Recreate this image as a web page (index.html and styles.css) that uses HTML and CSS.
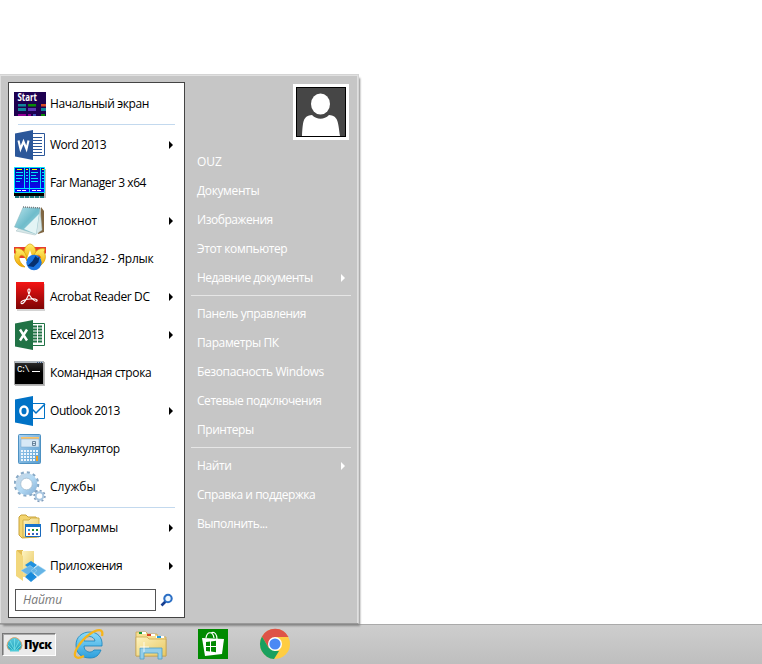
FILE: index.html
```html
<!DOCTYPE html>
<html lang="ru">
<head>
<meta charset="utf-8">
<title>Пуск</title>
<link rel="stylesheet" href="styles.css">
</head>
<body>
<svg class="defs" width="0" height="0" aria-hidden="true">
  <defs>
    <linearGradient id="red" x2="0" y2="1"><stop stop-color="#f51414"/><stop offset="1" stop-color="#7d0505"/></linearGradient>
    <linearGradient id="note" x2="1" y2="1"><stop stop-color="#b9e4ec"/><stop offset=".5" stop-color="#6fbccb"/><stop offset="1" stop-color="#b4dde4"/></linearGradient>
    <linearGradient id="gold" x2="0" y2="1"><stop stop-color="#fff06a"/><stop offset="1" stop-color="#f2a500"/></linearGradient>
    <linearGradient id="folder" x2="1" y2="1"><stop stop-color="#fdf3c0"/><stop offset="1" stop-color="#e8c761"/></linearGradient>
    <linearGradient id="calc" x2="1" y2="1"><stop stop-color="#a9d2f2"/><stop offset="1" stop-color="#5b9fd0"/></linearGradient>
    <linearGradient id="gear" x2="1" y2="1"><stop stop-color="#c6d7e6"/><stop offset=".5" stop-color="#b4dbf5"/><stop offset="1" stop-color="#8fb8dc"/></linearGradient>
    <linearGradient id="ie" x2="0" y2="1"><stop stop-color="#8edcf8"/><stop offset="1" stop-color="#2e9fdd"/></linearGradient>
    <linearGradient id="cmd" x2="0" y2="1"><stop stop-color="#303030"/><stop offset=".5" stop-color="#000"/></linearGradient>
    <linearGradient id="far" x2="0" y2="1"><stop stop-color="#0a0a9c"/><stop offset="1" stop-color="#0808ff"/></linearGradient>
    <linearGradient id="shell" x2="0" y2="1"><stop stop-color="#5ccbe0"/><stop offset="1" stop-color="#1fa3b8"/></linearGradient>
    <g id="pages"><path d="M17 4.500h13.500v22H17z" fill="#fff" stroke="currentColor"/></g>
    <path id="cover" d="M1 4.500 19 1v30L1 27.500z"/>
  </defs>
</svg>
<div class="desktop">
<main class="menu">
  <section class="programs">
    <div class="item"><svg class="icon" viewBox="0 0 32 32"><path fill="#1e0050" d="M0 4h32v24H0z"/><path fill="#11879a" d="M4 16h8v2.500H4zM27 20h5v3h-5z"/><path fill="#088b08" d="M14 16h8v2.500h-8z"/><path fill="#d74a26" d="M27 16h5v2.500h-5z"/><path fill="#5d38b5" d="M14 20h8v3h-8z"/><path fill="#900095" d="M4 26h8v2H4zM14 26h3v2h-3z"/><path fill="#11879a" d="M4 20h8v3H4z"/><path fill="#088b08" d="M27 26h4v2h-4z"/><path fill="#4052bc" d="M19 26h3v2h-3z"/><text x="3.500" y="13" class="start-text" textLength="19.500" lengthAdjust="spacingAndGlyphs">Start</text></svg><span class="tight-3">Начальный экран</span></div>
    <hr>
    <div class="item"><svg class="icon word" viewBox="0 0 32 32"><use href="#pages"/><path stroke="currentColor" d="M19 8.500h9M19 11.500h9M19 14.500h9M19 17.500h9M19 20.500h9M19 23.500h9"/><use href="#cover" fill="currentColor"/><path d="m4.500 11.500 2 8.500L9.500 12.500 12.500 20l2-8.500" fill="none" stroke="#fff" stroke-width="2.100"/></svg><span class="tight-5">Word 2013</span><i class="arrow"></i></div>
    <div class="item"><svg class="icon" viewBox="0 0 32 32"><path fill="#bbb" d="M2 2h30v29H2z"/><path fill="#000" d="M0 25h30v4H0z"/><path stroke="#18777c" stroke-width="2" stroke-dasharray="4 1" d="M1 30h30"/><path fill="url(#far)" stroke="#00e4fa" d="M.5.500h30v25H.500z"/><path fill="none" stroke="#00e4fa" d="M10.500 1v20M15.500 1v24M26.500 1v20M1 21.500h30"/><path stroke="#ff0" d="M3 2.500h5M12 2.500h2M18 2.500h5M28 2.500h2"/><path stroke="#00e4fa" stroke-width="1.200" d="M2 5.500h7M2 8.500h7M2 11.500h6M2 14.500h4M12 5.500h2M12 8.500h2M12 11.500h2M12 14.500h2M17 5.500h7M17 8.500h5M17 11.500h7M17 14.500h7M28 5.500h2M28 8.500h2M28 11.500h2M28 14.500h2"/><path stroke="#fff" stroke-dasharray="4 1" d="M3 23.500h10M18 23.500h10"/></svg><span class="tight-4">Far Manager 3 x64</span></div>
    <div class="item"><svg class="icon" viewBox="0 0 32 32"><path fill="#806642" d="m27 2 3 4v21l-6 2z"/><path fill="#d7e8e9" stroke="#a7bfc2" stroke-width=".5" d="M26 3l2 22-7 5-19-4z"/><path fill="url(#note)" stroke="#86b5bd" stroke-width=".5" d="M9 2.500 26 3l-4 26L.500 22z"/><path fill="#e3f4f5" d="m10 24 15-15-3 20z"/><path stroke="#747d80" stroke-width="1.500" stroke-dasharray="1 1" d="m9 2 18 1"/></svg><span class="tight-1">Блокнот</span><i class="arrow"></i></div>
    <div class="item"><svg class="icon" viewBox="0 0 32 32"><path fill="#e83c2f" d="M0 4h32v6l-5 5H5L0 10z"/><g fill="url(#gold)" stroke="#d79b00" stroke-width=".7"><path d="M10 10c0-6 4-9 6-9s6 3 6 9l-3 8h-6z"/><path d="M1 6c7-2 12 4 12 12-2-5-5-7-7-5-2 3 0 7 5 11C3 24-2 15 2 9z"/><path d="M31 6c-7-2-12 4-12 12 2-5 5-7 7-5 2 3 0 7-5 11 8 0 13-9 9-15z"/></g><path fill="#fff" d="m16 7 3 9-3 7-3-7z"/><circle cx="20" cy="19.500" r="7.700" fill="#1c74e0"/><path d="m13.500 23 5-5 3-5 2 2 2-1-1 5-5 5z" fill="#07306f"/></svg><span class="tight-2">miranda32 - Ярлык</span></div>
    <div class="item"><svg class="icon" viewBox="0 0 32 32"><path fill="#aaa" d="M3 3h28v27H3z" opacity=".5"/><path fill="url(#red)" d="M2 1h28v27H2z"/><path d="M15 8c2 0 1 4-2 9-2 4-5 7-6 5-1-3 13-6 16-3 1 3-5 0-7-4-2-3-3-7-1-7z" fill="none" stroke="#fff" stroke-width="1.100"/></svg><span class="tight-3">Acrobat Reader DC</span><i class="arrow"></i></div>
    <div class="item"><svg class="icon excel" viewBox="0 0 32 32"><use href="#pages"/><path stroke="currentColor" stroke-width="2" stroke-dasharray="4 1" d="M19 7.500h9M19 10.500h9M19 13.500h9M19 16.500h9M19 19.500h9M19 22.500h9"/><use href="#cover" fill="currentColor"/><path d="m6 10.500 7 11M13 10.500l-7 11" stroke="#fff" stroke-width="2.400"/></svg><span class="tight-5">Excel 2013</span><i class="arrow"></i></div>
    <div class="item"><svg class="icon" viewBox="0 0 32 32"><path fill="#bbb" d="M1 5h30v24H1z"/><path fill="url(#cmd)" stroke="#aaa" d="M.5 4.500h29v23H.500z"/><path fill="#aeb6bd" d="M1 4h28v2H1z"/><path stroke="#fff" d="M18 14.500h8"/><path stroke="#345483" stroke-dasharray="1 1" d="M23 5.500h5"/><text x="3" y="15" class="prompt" textLength="13">C:\</text></svg><span class="tight-3">Командная строка</span></div>
    <div class="item"><svg class="icon outlook" viewBox="0 0 32 32"><path d="M17 8.500h13.500v15H17z" fill="#fff" stroke="currentColor"/><path d="m18 14 4 4 9-9" fill="none" stroke="currentColor" stroke-width="1.500"/><use href="#cover" fill="currentColor"/><ellipse cx="10" cy="16" rx="3.700" ry="4.500" fill="none" stroke="#fff" stroke-width="2.300"/></svg><span class="tight-4">Outlook 2013</span><i class="arrow"></i></div>
    <div class="item"><svg class="icon" viewBox="0 0 32 32"><rect x="4.500" y="1.500" width="22" height="29" rx="1" fill="url(#calc)" stroke="#4d91c2"/><path fill="#fac36b" d="M7 4h18v2H7z"/><path fill="#d7e9f6" stroke="#75a6ca" stroke-width=".5" d="M7 6h18v8H7z"/><path d="M18.500 8.500h3v4h-3zM18.500 10.500h3" fill="none" stroke="#536f89" stroke-width=".8"/><path stroke="#eef6fc" stroke-width="2" stroke-dasharray="2 1" d="M7 18h17M7 21h17M7 24h14M7 27h14"/><path fill="#f5a01d" d="M22 23h2v5h-2z"/></svg><span class="tight-3">Калькулятор</span></div>
    <div class="item"><svg class="icon" viewBox="0 0 32 32" fill="none"><circle cx="12.500" cy="13" r="11.500" stroke="#87a9c6" stroke-width="2.500" stroke-dasharray="3 3.020"/><circle cx="12.500" cy="13" r="8.300" stroke="url(#gear)" stroke-width="5"/><circle cx="12.500" cy="13" r="5.800" fill="#fff" stroke="#9ab3c7" stroke-width=".7"/><circle cx="25.500" cy="25" r="5.300" stroke="#829dbb" stroke-width="1.800" stroke-dasharray="2 2.080"/><circle cx="25.500" cy="25" r="3.800" fill="#fff" stroke="#a9c7e1" stroke-width="2"/></svg><span>Службы</span></div>
    <hr>
    <div class="item"><svg class="icon" viewBox="0 0 32 32"><path fill="#f4d56f" stroke="#c9a33b" d="m5 5 2-2h5l2 2h8l1 2v18L8 26 5 23z"/><path fill="url(#folder)" stroke="#d1af48" d="M9 8h6l2-2h8v19H9z"/><path fill="#fff" stroke="#1868bb" d="M11.500 12.500h15v12h-15z"/><path fill="#1673cb" d="M11 12h16v3H11z"/><path fill="#2f93dd" d="M14 17h2v2h-2z"/><path fill="#218c34" d="M18 17h2v2h-2zM22 17h2v2h-2z"/><path fill="#df4a25" d="M14 21h2v2h-2z"/><path fill="#3465c0" d="M18 21h2v2h-2zM22 21h2v2h-2z"/></svg><span class="tight-1">Программы</span><i class="arrow"></i></div>
    <div class="item"><svg class="icon" viewBox="0 0 32 32"><path fill="#e3bd56" d="M3 0h6v28l-6-3z"/><path fill="url(#folder)" d="M8 1h12v26H8z"/><path fill="#f2d77c" d="m2 0 7 6v25l-7-5z"/><path fill="#2191df" d="m17 11 6 4-6 5-6-5z"/><path fill="#238fdd" d="m17 22 6 5-6 5-6-5z"/><path fill="#65b4e6" stroke="#a8daf5" stroke-width=".5" d="m7 20.500 9-5 7 5-7 6zM17 20.500l7-5 8 5-8 6z"/><path fill="#168adb" d="m17 22 4 4-4 4-5-4z"/></svg><span class="tight-2">Приложения</span><i class="arrow"></i></div>
    <div class="search"><input placeholder="Найти" aria-label="Найти"><svg width="14" height="14" viewBox="0 0 14 14"><path d="M5.500 8.500 1.500 12.500" stroke="#173f91" stroke-width="2.600"/><circle cx="8" cy="5.500" r="3.700" fill="#eef8ff" stroke="#2c6fc5" stroke-width="2.100"/></svg></div>
  </section>
  <nav class="places">
    <div class="avatar"><svg width="50" height="50" viewBox="0 0 50 50"><path fill="#464646" stroke="#000" stroke-width="2" d="M0 0h50v50H0z"/><ellipse cx="24.500" cy="17" rx="9.500" ry="10.500" fill="#fff"/><path fill="#fff" d="M6 49c1-15 1-20 10-21 5 5 12 5 17 0 9 1 9 6 11 21z"/></svg></div>
    <a>OUZ</a><a class="tight-3">Документы</a><a class="tight-4">Изображения</a><a class="tight-3">Этот компьютер</a><a class="tight-5">Недавние документы<i class="arrow"></i></a>
    <hr>
    <a class="tight-4">Панель управления</a><a class="tight-3">Параметры ПК</a><a class="tight-3">Безопасность Windows</a><a class="tight-4">Сетевые подключения</a><a class="tight-4">Принтеры</a>
    <hr>
    <a class="tight-3">Найти<i class="arrow"></i></a><a class="tight-4">Справка и поддержка</a><a class="tight-4">Выполнить...</a>
  </nav>
</main>
<footer class="taskbar">
  <button class="start"><svg width="17" height="17" viewBox="0 0 17 17"><path d="M4.500 14.500Q1 13 1 9.500T4 3.500Q8.500-.500 13 3.500q3 2.500 3 6t-3.500 5z" fill="url(#shell)" stroke="#dba267" stroke-width=".9"/><path d="M8.500 14 4 5M8.500 14V3M8.500 14 13 5M7 14 2 9M10 14l5-5" stroke="#8ff0f5" stroke-width=".6"/><path fill="#4fcbd8" d="M4 13.500h9v2H4z"/></svg><b>Пуск</b></button>
  <svg class="task" viewBox="0 0 32 32"><path d="M29 18c1-9-5-14-12-14C9 4 3 9 3 17c0 9 6 13 14 13 6 0 9-3 11-8h-7c-3 4-10 2-10-4h18zM11 13c1-6 10-6 11 0z" fill="url(#ie)" stroke="#1683bb" stroke-width=".8"/><path d="M29 8c2-8-5-7-12-2C7 13-1 26 3 29c2 2 6 0 8-1" fill="none" stroke="#f6b51b" stroke-width="2.300"/></svg>
  <svg class="task" viewBox="0 0 32 32"><path fill="#f6df93" stroke="#c6a149" stroke-width=".7" d="M1 4h10l2 2h9l1 3h8v19H1z"/><path stroke="#fff" stroke-width="2" d="M4 5h7M13 7h7M21 9h8"/><path fill="#159736" d="M4 4h3v2H4z"/><path fill="#db4125" d="M12 6h4v2h-4z"/><path fill="#249bdf" d="M22 8h4v2h-4z"/><path fill="url(#folder)" stroke="#c6a149" stroke-width=".7" d="M1 9h11l2 2h17v17H1z"/><path fill="#93cee9" stroke="#4d9fc7" stroke-width=".8" d="M5 20h22v11h-4v-6H9v6H5z"/><path stroke="#fff" stroke-width=".8" d="M9 14v10M5 19h9"/></svg>
  <svg class="task" viewBox="0 0 32 32"><path fill="#008a00" d="M1 1h30v30H1z"/><path d="M9 10c1-7 7-7 8 0M14 5c4-2 6 2 6 6" fill="none" stroke="#fff" stroke-width="1.200"/><path fill="#fff" d="m5 10 22 1-2 15-17 2z"/><path fill="#008a00" d="m9 14 4-.5V18H9zM14 13.400l5-.6V18h-5zM9 19h4v4.500L9 23zM14 19h5v5.200l-5-.7z"/></svg>
  <svg class="task" viewBox="0 0 32 32"><circle cx="16" cy="16" r="15" fill="#ffcd42"/><path fill="#de5347" d="M3 8.500a15 15 0 0 1 26.500.5H16L9.500 19.500z"/><path fill="#1aa05f" d="M3 8.500 9.500 19.500 16 23h4l-5 8A15 15 0 0 1 3 8.500z"/><circle cx="16" cy="16" r="7" fill="#fff"/><circle cx="16" cy="16" r="5.600" fill="#4a89f4"/></svg>
</footer>
</div>
</body>
</html>
```
FILE: styles.css
```css
* { box-sizing: border-box; }
body { margin: 0; background: #fff; font: 12px/16px "Open Sans", "Noto Sans", sans-serif; color: #000; overflow: hidden; }
.defs { position: absolute; }
.desktop { height: 664px; padding-top: 74px; display: flex; flex-direction: column; }
.menu { width: 359px; height: 550px; padding: 6px 3px 5px 8px; display: flex; background: #c6c6c6; border-top: 1px solid #d4d4d4; border-right: 1px solid #d4d4d4; border-bottom: 1px solid #999; box-shadow: inset -1px 1px #e0e0e0, inset 1px 0 #ddd, 2px 3px 2px -1px #888; z-index: 1; }
.programs { width: 177px; height: 536px; margin-top: 1px; background: #fff; border: 1px solid #444; padding: 2px 5px 0; flex: none; }
.item { height: 38px; display: flex; align-items: center; white-space: nowrap; }
.icon { width: 32px; height: 32px; flex: none; margin-right: 4px; }
.word { color: #2b579a; }
.excel { color: #217346; }
.outlook { color: #0072c6; }
.start-text { fill: #fff; font-size: 10px; font-weight: 700; }
.prompt { fill: #fff; font: 9px "Liberation Mono", monospace; }
.programs hr { height: 1px; border: 0; background: #c3d9ee; margin: 1px 4px; }
.tight-1 { letter-spacing: -.15px; }
.tight-2 { letter-spacing: -.28px; }
.tight-3 { letter-spacing: -.38px; }
.tight-4 { letter-spacing: -.45px; }
.tight-5 { letter-spacing: -.55px; }
.arrow { width: 0; height: 0; margin-left: auto; margin-right: 6px; border: 4px solid transparent; border-left: 4px solid #000; border-right: 0; }
.search { margin-top: 4px; padding-left: 1px; display: flex; align-items: center; gap: 4px; }
.search input { width: 141px; height: 22px; padding: 0 7px 2px; border: 1px solid #555; border-radius: 0; font: italic 12px "Open Sans", sans-serif; outline: none; }
.search input::placeholder { color: #777; opacity: 1; }
.places { width: 171px; padding: 3px 5px 0 6px; display: flex; flex-direction: column; color: #fff; }
.avatar { width: 56px; height: 56px; padding: 3px; background: #fff; margin: 0 0 7px 102px; }
.avatar svg { display: block; }
.places a { height: 29px; padding-left: 6px; display: flex; align-items: center; white-space: nowrap; }
.places .arrow { border-left-color: #fff; }
.places hr { width: 160px; height: 1px; margin: 3px 0; border: 0; background: #e6e6e6; }
.taskbar { height: 40px; padding-left: 2px; display: flex; align-items: center; background: linear-gradient(#cecece, #bebebe); border-top: 1px solid #aaa; padding-bottom: 1px; }
.start { width: 54px; height: 23px; padding: 1px 2px 0 3px; display: flex; align-items: center; gap: 1px; background: #ebebeb; border: 1px solid; border-color: #777 #fff #fff #777; box-shadow: inset 1px 1px #aaa; color: #000; font: 700 11.500px "Open Sans", sans-serif; }
.start svg { flex: none; }
.start b { letter-spacing: -.5px; }
.task { width: 32px; height: 32px; margin-right: 30px; }
.start + .task { margin-left: 17px; }
```
